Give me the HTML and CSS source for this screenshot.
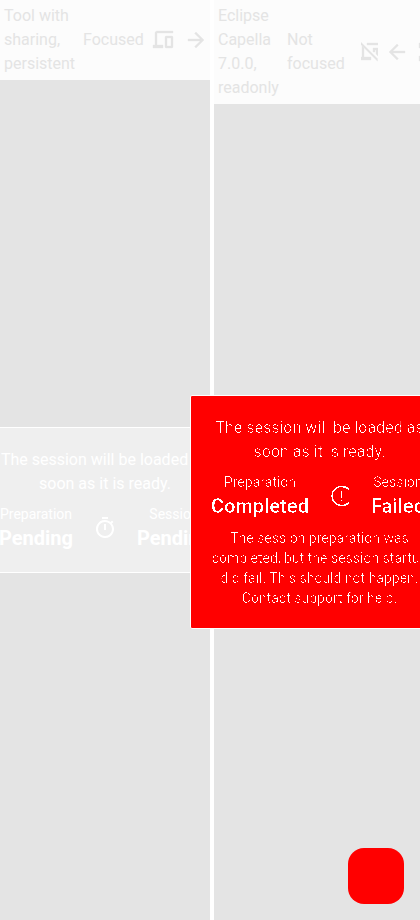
FILE: index.html
```
<!DOCTYPE html>
<html lang="en">
<head>
<meta charset="utf-8">
<title>Sessions</title>
<link rel="stylesheet" href="styles.css">
</head>
<body>
<svg class="defs" width="0" height="0" aria-hidden="true">
  <filter id="crisp" x="0" y="0" width="100%" height="100%" color-interpolation-filters="sRGB">
    <feComponentTransfer><feFuncA type="linear" slope="100" intercept="-84"/></feComponentTransfer>
  </filter>
</svg>
<main class="grid">
  <section class="pane">
    <header class="bar">
      <span class="tool">Tool with sharing, persistent</span>
      <span>Focused</span>
      <svg class="icon" viewBox="0 0 24 24"><path d="M3 17V5q0-.8.6-1.400T5 3h16v2H5v12h6v3H1v-3zM14 20q-1 0-1-1V9q0-1 1-1h6q1 0 1 1v10q0 1-1 1h-6zM15 18h4v-8h-4z" fill-rule="evenodd"/></svg>
      <svg class="icon" viewBox="0 0 24 24"><path d="M16.200 13H4v-2h12.200l-5.600-5.600L12 4l8 8-8 8-1.400-1.400z"/></svg>
    </header>
    <div class="view">
      <article class="card">
        <p class="lead">The session will be loaded as<br>soon as it is ready.</p>
        <div class="states">
          <div><div class="label">Preparation</div><div class="value">Pending</div></div>
          <svg class="icon" viewBox="0 0 24 24"><path d="M9 3V1h6v2zm2 11h2V8h-2zm1 8a9 9 0 1 1 5.600-16l1.400-1.400L20.400 6 19 7.400A9 9 0 0 1 12 22zm0-2a7 7 0 1 0 0-14 7 7 0 0 0 0 14z" fill-rule="evenodd"/></svg>
          <div><div class="label">Session</div><div class="value">Pending</div></div>
        </div>
      </article>
    </div>
  </section>
  <section class="pane">
    <header class="bar tall">
      <span class="name">Eclipse Capella 7.0.0, readonly</span>
      <span class="focus">Not focused</span>
      <svg class="icon tight" viewBox="4 0 17 24"><path d="M4 2.200 20.500 18.700v2.500L4 4.700zM10 3h11v2H10zM5 6l2 2v9h7v3H4v-3h1zM16 8h5v2h-3v2h-2zM19 10h2v6l-2-2z"/></svg>
      <svg class="icon" viewBox="0 0 24 24"><path d="M7.800 13H20v-2H7.800l5.600-5.600L12 4l-8 8 8 8 1.400-1.400z"/></svg>
      <svg class="icon more" viewBox="0 0 24 24"><path d="M3 3h5v2H5v3H3zM3 16h2v3h3v2H3z"/></svg>
    </header>
    <div class="view">
      <article class="card failed">
        <div class="content">
          <p class="lead">The session will be loaded as<br>soon as it is ready.</p>
          <div class="states">
            <div><div class="label">Preparation</div><div class="value">Completed</div></div>
            <svg class="icon" viewBox="0 0 24 24"><path class="ring" d="M20 5.500Q17 2.500 12.500 2.500A9.500 9.500 0 0 0 12.500 21.500Q17 21.500 20 18.500"/><path d="M12 7h1v7h-1zM12 16h1v1h-1z"/></svg>
            <div class="end"><div class="label">Session</div><div class="value">Failed</div></div>
          </div>
          <p class="note">The session preparation was<br>completed, but the session startup<br>did fail. This should not happen.<br>Contact support for help.</p>
        </div>
      </article>
    </div>
  </section>
</main>
<button class="fab" aria-label="Menu"></button>
</body>
</html>
```
FILE: styles.css
```
* { box-sizing: border-box; }
html, body { overflow: hidden; }
body { margin: 0; height: 920px; background: #fff; font: 16px/24px Roboto, sans-serif; }
p { margin: 0; }
.defs { position: absolute; }
.grid { display: grid; grid-template-columns: 210px 210px; gap: 4px; width: 420px; height: 920px; overflow: hidden; }
.pane { display: flex; flex-direction: column; min-width: 0; }
.bar { display: flex; align-items: center; gap: 8px; padding: 4px; background: #fcfcfc; color: #e4e4e4; overflow: hidden; }
.bar > span { flex: none; }
.tool { width: 71px; }
.name { width: 61px; }
.focus { width: 58px; }
.icon { width: 24px; height: 24px; flex: none; fill: currentColor; }
.bar .icon { stroke: currentColor; stroke-width: .3; }
.bar .tight { width: 17px; margin: 0 -1px 0 8px; }
.bar .more { margin-left: -1px; }
.tall { height: 104px; }
.view { flex: 1; display: flex; align-items: center; justify-content: center; background: #e4e4e4; }
.card { flex: none; width: 258px; padding: 20px; border: 1px solid #fff; background: #efefef; color: #fff; text-align: center; }
.lead { margin: 0 -4px 8px; white-space: nowrap; }
.states { display: flex; align-items: center; justify-content: center; gap: 20px; }
.label { font-size: 14px; line-height: 20px; }
.value { font-size: 20px; line-height: 28px; font-weight: 700; }
.failed { position: relative; z-index: 1; background: #f00; color: #fff; border-radius: 2px; }
.content { filter: url(#crisp); margin: 0 -8px; }
.content .lead { padding-left: 1px; }
.end { margin: 0 2px 0 -2px; }
.note { margin-top: 8px; padding-left: 1px; font-size: 14px; line-height: 20px; white-space: nowrap; }
.ring { fill: none; stroke: currentColor; stroke-width: 2; }
.fab { position: absolute; left: 348px; top: 848px; width: 56px; height: 56px; border: 0; border-radius: 16px; background: #f00; z-index: 2; }
```
